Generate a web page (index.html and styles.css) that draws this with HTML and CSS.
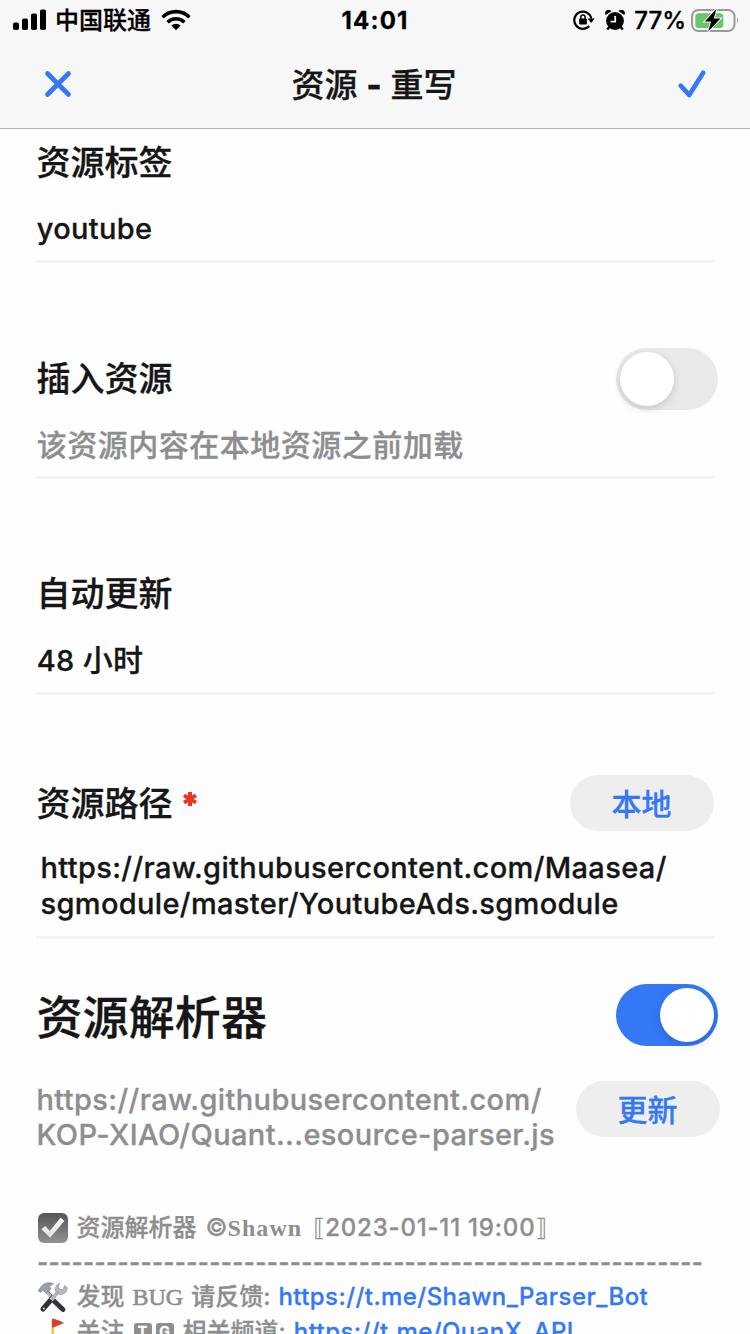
FILE: index.html
```html
<!DOCTYPE html>
<html lang="zh-CN">
<head>
<meta charset="utf-8">
<title>资源 - 重写</title>
<link rel="stylesheet" href="styles.css">
</head>
<body>
<div class="screen">
  <header class="header">
    <div class="status">
      <div class="status-left">
        <svg class="signal" width="34" height="22" viewBox="0 0 34 22"><rect x="0" y="13.5" width="6" height="7.5" rx="1.8"/><rect x="9" y="9.5" width="6" height="11.5" rx="1.8"/><rect x="18" y="4.5" width="6" height="16.5" rx="1.8"/><rect x="27" y="0.5" width="6" height="20.5" rx="1.8"/></svg>
        <span class="carrier">中国联通</span>
        <svg class="wifi" width="30" height="22" viewBox="0 0 30 22"><path class="arc" d="M1.6 8.2A19 19 0 0 1 28.4 8.2M6.6 13.2A12 12 0 0 1 23.4 13.2"/><path d="M15 21.2L10.3 16.6A6.8 6.8 0 0 1 19.7 16.6Z"/></svg>
      </div>
      <span class="clock">14:01</span>
      <div class="status-right">
        <svg class="lock" width="22" height="20" viewBox="0 0 22 20"><path class="ring" d="M16.2 16A8.6 8.6 0 1 1 18.3 8.6"/><path d="M14.6 8.6H21.6L18.2 13Z"/><rect x="6.1" y="8.6" width="7.8" height="6" rx="1"/><path class="shackle" d="M7.9 9V7.1a2.1 2.1 0 0 1 4.2 0V9"/></svg>
        <svg class="alarm" width="20" height="21" viewBox="0 0 20 21"><circle cx="10" cy="11" r="8.9"/><path d="M.8 5A3.2 3.2 0 0 1 6.4 1.2ZM19.2 5A3.2 3.2 0 0 0 13.6 1.2Z"/><path class="leg" d="M4.2 17.2L2.2 19.6M15.8 17.2L17.8 19.6"/><path class="hands" d="M10.2 6V11.6H5.5"/></svg>
        <span class="percent">77%</span>
        <svg class="battery" width="49" height="26" viewBox="0 0 49 26"><rect class="case" x="1" y="3" width="42.5" height="21" rx="6.5"/><rect class="charge" x="4.3" y="6.2" width="28" height="14.8" rx="3.5"/><path class="cap" d="M46 9.8Q48.2 13.2 46 16.6Z"/><path class="bolt" d="M25.5 1.8L13.8 14.5H20L17.2 24.6L29.5 11.5H22.8Z"/></svg>
      </div>
    </div>
    <nav class="nav">
      <svg class="close" width="28" height="28" viewBox="0 0 28 28"><path d="M3.5 3.5L24.5 24.5M24.5 3.5L3.5 24.5"/></svg>
      <h1 class="nav-title">资源 <b>-</b> 重写</h1>
      <svg class="confirm" width="30" height="30" viewBox="0 0 30 30"><path d="M3.7 16.7L12.2 26L26.2 3.7"/></svg>
    </nav>
  </header>
  <main>
    <section class="field first">
      <h2 class="label">资源标签</h2>
      <div class="value">youtube</div>
    </section>
    <section class="field">
      <div class="label-row"><h2 class="label">插入资源</h2><div class="toggle"><span class="knob"></span></div></div>
      <div class="value hint">该资源内容在本地资源之前加载</div>
    </section>
    <section class="field">
      <h2 class="label">自动更新</h2>
      <div class="value">48 <span class="unit">小时</span></div>
    </section>
    <section class="field path">
      <div class="label-row"><h2 class="label">资源路径</h2><svg class="required" width="16" height="16" viewBox="0 0 16 16"><path d="M8 1V15M2 4.4L14 11.6M14 4.4L2 11.6"/></svg><div class="button">本地</div></div>
      <div class="value url"><div>https://raw.githubusercontent.com/Maasea/</div><div>sgmodule/master/YoutubeAds.sgmodule</div></div>
    </section>
    <section class="parser">
      <div class="parser-head"><h2 class="parser-title">资源解析器</h2><div class="toggle on"><span class="knob"></span></div></div>
      <div class="parser-source">
        <div class="source-url"><div>https://raw.githubusercontent.com/</div><div>KOP-XIAO/Quant...esource-parser.js</div></div>
        <div class="button">更新</div>
      </div>
      <div class="notes">
        <div class="note">
          <svg class="emoji" width="32" height="32" viewBox="0 0 32 32"><defs><linearGradient id="box" x2="0" y2="1"><stop stop-color="#555"/><stop offset="1" stop-color="#929292"/></linearGradient><linearGradient id="tick" x2="0" y2="1"><stop stop-color="#fff"/><stop offset="1" stop-color="#ddd"/></linearGradient></defs><rect x="1" y="1" width="30" height="30" rx="6" fill="url(#box)"/><path d="M4.5 17.2L8.2 14L12.8 19L23.6 5.8L27.3 9L13.2 25.8Z" fill="url(#tick)"/></svg>
          <span>资源解析器</span><span class="copy">©</span><span class="serif shawn">Shawn</span><span class="bracket open">⟦</span><span class="date">2023-01-11 19:00</span><span class="bracket">⟧</span>
        </div>
        <div class="note dashes">----------------------------------------------------------</div>
        <div class="note">
          <svg class="emoji" width="32" height="32" viewBox="0 0 32 32"><path d="M10 10.5L24.5 28" stroke="#2c2c30" stroke-width="3.5" stroke-linecap="round"/><path d="M17 20L26 28.5" stroke="#333338" stroke-width="4.8" stroke-linecap="round"/><path d="M9 10L17 19.5" stroke="#babdc2" stroke-width="2.8"/><path d="M6 28L15.5 17" stroke="#2f3035" stroke-width="5" stroke-linecap="round"/><path d="M14 18.8L23 9" stroke="#b4b7bc" stroke-width="4"/><path d="M22.5 2.2C18.5 3.8 17.5 8 19.3 11.2L22.7 13.5C27.5 13.8 30.3 10.5 30.2 6.5L27.7 4.5L26.2 8.8L22.5 8.2L21.2 5.8Z" fill="#b6b9be" stroke="#85888e" stroke-width=".6"/><path d="M1 9.8L3.8 11.6L5.6 9.2L9.2 12.2L14 7.8L12.4 5.5L16.5 2.8C11.5.8 7 1.8 4.4 5.2Z" fill="#9ca1a8" stroke="#787d84" stroke-width=".6"/><circle cx="6.8" cy="27.6" r="1" fill="#ddd"/></svg>
          <span>发现</span><span class="serif bug">BUG</span><span>请反馈:</span><a class="link">https://t.me/Shawn_Parser_Bot</a>
        </div>
        <div class="note">
          <svg class="emoji" width="32" height="32" viewBox="0 0 32 32"><path d="M15.7 4V32" stroke="#eebf38" stroke-width="2.2"/><path d="M15 2.5Q20 3.2 27 7L16.5 11.5H15Z" fill="#dc3e2b"/></svg>
          <span>关注</span><span class="tile t">T</span><span class="tile g">G</span><span>相关频道:</span><a class="link">https://t.me/QuanX_API</a>
        </div>
      </div>
    </section>
  </main>
</div>
</body>
</html>
```
FILE: styles.css
```css
* { box-sizing: border-box; }
body { margin: 0; background: #fefefe; }
.screen {
  width: 750px; height: 1334px; overflow: hidden;
  font-family: Inter, "Noto Sans CJK SC", sans-serif;
  font-weight: 500; color: #161616; white-space: nowrap;
  -webkit-text-stroke: .3px currentColor;
}
svg { display: block; flex: none; fill: none; }
h1, h2 { margin: 0; font-weight: 500; }
main { display: flex; flex-direction: column; }

.header { height: 129px; background: #f7f7f7; border-bottom: 1px solid #b4b4b4; }
.status { display: grid; grid-template-columns: 1fr auto 1fr; align-items: center; height: 40px; color: #000; }
.status-left { display: flex; align-items: center; height: 40px; padding-left: 13px; }
.status svg { fill: #000; }
.signal { margin-top: -1px; }
.carrier, .clock, .percent { height: 40px; line-height: 42px; font-size: 24px; }
.carrier { margin-left: 8px; }
.wifi { margin-left: 10px; }
.wifi .arc { fill: none; stroke: #000; stroke-width: 3.6; }
.clock { font-weight: 650; letter-spacing: 1.2px; }
.status-right { display: flex; align-items: center; justify-content: flex-end; height: 40px; padding-right: 10px; }
.status .ring { fill: none; stroke: #000; stroke-width: 2.2; }
.status .shackle { fill: none; stroke: #000; stroke-width: 1.5; }
.alarm { margin-left: 10px; }
.leg { stroke: #000; stroke-width: 2.4; }
.status .hands { fill: none; stroke: #f7f7f7; stroke-width: 1.8; }
.percent { margin-left: 9px; }
.battery { margin: -1px 0 0 5px; }
.status .case { fill: none; stroke: #999; stroke-width: 2; }
.status .charge { fill: #67c56b; }
.status .cap { fill: #999; }
.bolt { stroke: #f7f7f7; stroke-width: 2; paint-order: stroke; }

.nav { display: flex; align-items: center; justify-content: space-between; height: 88px; padding: 0 43px 0 44px; }
.nav-title { margin-left: -1px; padding-top: 2px; font-size: 33px; line-height: 48px; }
.nav-title b { font-weight: 800; }
.close path, .confirm path { stroke: #3478f6; stroke-width: 4.7; stroke-linecap: round; stroke-linejoin: round; }

.field {
  display: flex; flex-direction: column; justify-content: flex-end; gap: 25px;
  height: 216px; margin: 0 36px; padding-bottom: 13px; border-bottom: 3px solid #f3f3f3;
}
.field.first { height: 134px; }
.label { margin-bottom: -2px; padding-left: .6px; font-size: 34px; line-height: 50px; }
.label-row { display: flex; align-items: center; height: 48px; }
.value { padding-left: .7px; font-size: 29px; line-height: 36px; letter-spacing: .35px; }
.unit { font-size: 30px; }
.hint { color: #8e8e90; font-size: 30px; letter-spacing: .5px; }
.toggle { display: flex; flex: none; width: 102px; height: 62px; margin: 2px -4px 0 auto; padding: 4px; border-radius: 31px; background: #e9e9e9; }
.knob { width: 54px; height: 54px; border-radius: 50%; background: #fff; box-shadow: 0 3px 8px rgba(0, 0, 0, .15); }
.toggle.on { background: #3478f6; justify-content: flex-end; }
.button {
  flex: none; width: 144px; height: 56px; margin-left: auto; padding-right: 1px; border-radius: 28px; background: #eee;
  color: #3478f6; font-size: 30px; line-height: 58px; text-align: center; letter-spacing: 0;
}
.required { margin: -8px 0 0 9.4px; }
.required path { stroke: #eb3626; stroke-width: 4; }
.field.path { height: 244px; gap: 23px; padding-bottom: 14px; }
.url { padding-left: 4.5px; }

.parser { padding: 45px 36px 0 36.5px; }
.parser-head { display: flex; align-items: center; height: 62px; }
.parser-head .toggle { margin-top: 0; }
.parser-title { padding-top: 4px; font-size: 46px; line-height: 62px; letter-spacing: .1px; }
.parser-source { display: flex; align-items: center; height: 70px; margin: 36px -6px 0 0; color: #8e8e90; font-size: 29px; line-height: 35px; letter-spacing: .38px; }
.parser-source .button { margin-top: -16px; }
.notes { margin-top: 59px; padding-left: .5px; color: #8e8e90; font-size: 24px; }
.note { display: flex; align-items: center; height: 34.6px; line-height: 36px; }
.emoji { margin-right: 7.5px; }
.dashes { font-weight: 600; letter-spacing: .32px; }
.copy { margin-left: 9px; }
.serif { font-family: "Liberation Serif", serif; font-weight: 700; }
.shawn { letter-spacing: 1.1px; -webkit-text-stroke: 0; }
.date { letter-spacing: .8px; }
.open { margin-left: 11px; }
.bracket { font-family: "DejaVu Sans", sans-serif; -webkit-text-stroke: 0; }
.bug { margin: 0 8px; font-weight: 400; -webkit-text-stroke-width: .6px; }
.link { margin-left: 8px; color: #3478f6; letter-spacing: .43px; }
.tile { width: 18px; height: 18px; border-radius: 3px; background: #8e8e90; color: #fff; font-size: 14px; line-height: 18px; text-align: center; font-weight: 700; }
.t { margin-left: 9px; }
.g { margin: 0 9px 0 4px; }
```
